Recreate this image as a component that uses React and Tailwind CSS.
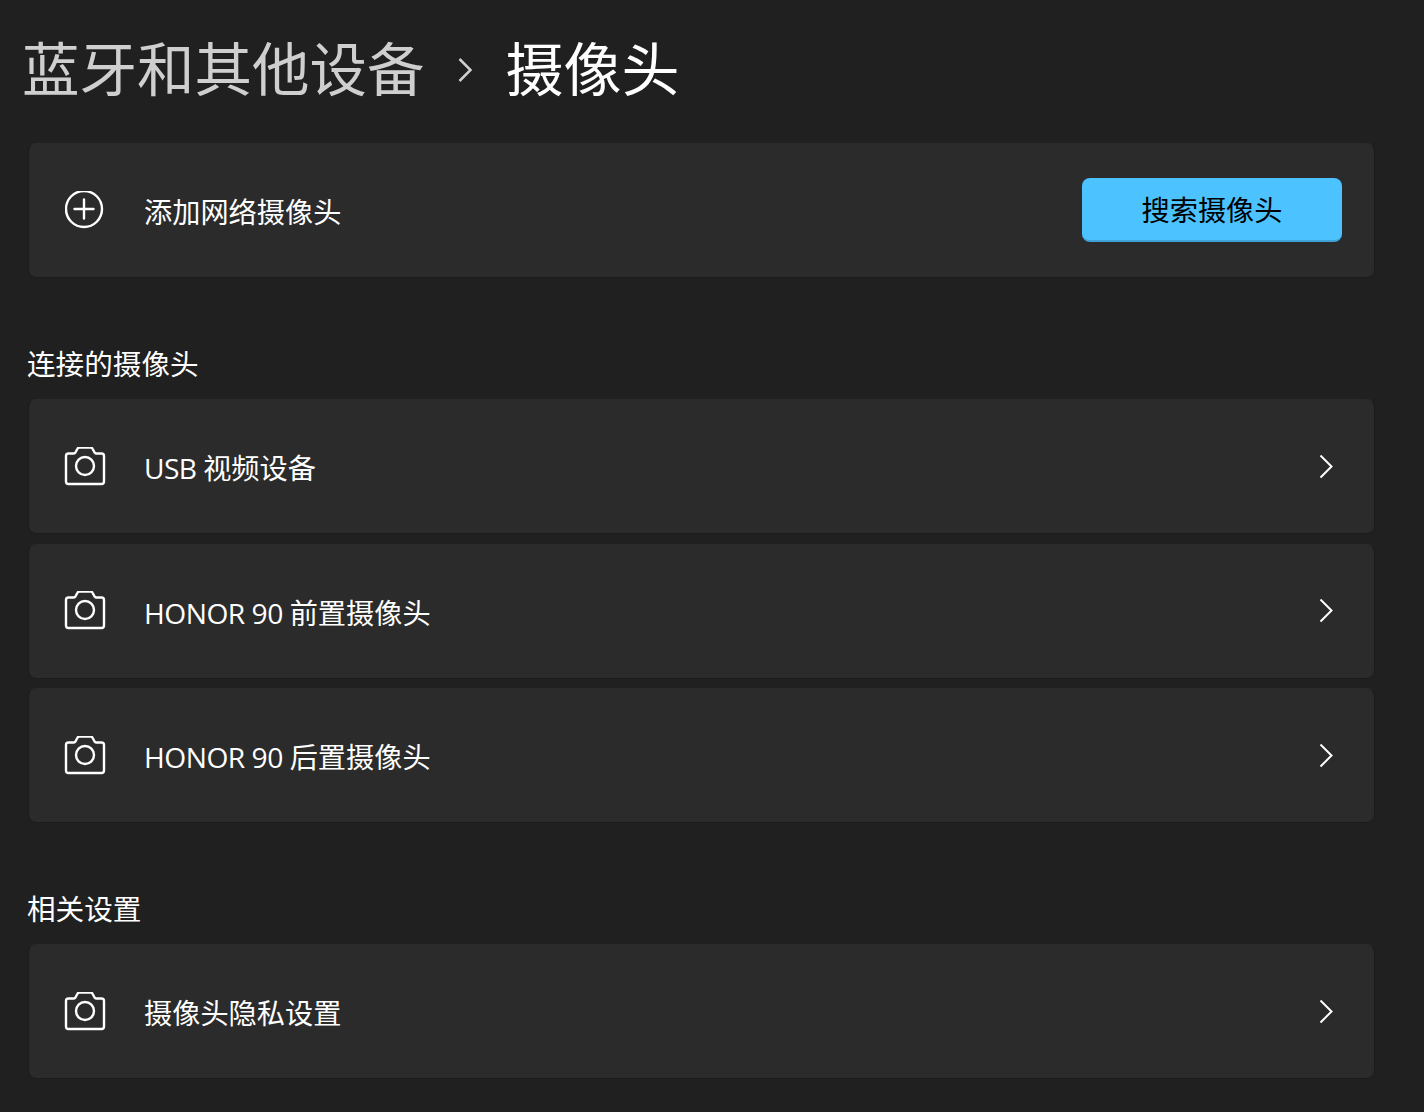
const PlusCircle = () => (
    <svg width="40" height="40" viewBox="0 0 40 40" fill="none" stroke="white" strokeWidth="2.4">
        <circle cx="19" cy="18" r="18" />
        <path d="M19 8.500v19M9.500 18h19" strokeLinecap="round" />
    </svg>
);

const Camera = () => (
    <svg width="42" height="40" viewBox="0 0 42 40" fill="none" stroke="white" strokeWidth="2.4" strokeLinejoin="round">
        <path d="M4.500 6.500h5.500c.6 0 1-.3 1.300-.8l2-3.700c.4-.9 1.100-1.500 2-1.500h11.400c.9 0 1.600.6 2 1.500l2 3.700c.3.5.7.8 1.300.8h5.500c1.500 0 2.500 1 2.500 2.500v25.500c0 1.500-1 2.500-2.500 2.500h-33c-1.500 0-2.500-1-2.500-2.500v-25.500c0-1.500 1-2.500 2.500-2.500z" />
        <circle cx="21" cy="19" r="9" />
    </svg>
);

const Chevron = () => (
    <svg className="mr-[9px]" width="14" height="24" viewBox="0 0 14 24" fill="none" stroke="white" strokeWidth="2">
        <path d="M1.500 .5l11 11-11 11" />
    </svg>
);

const Card = ({ icon, label, children, className = '' }) => (
    <div className={`flex h-[135px] items-center justify-between rounded-lg border border-[#1c1c1c] border-t-[#2b2b2b] bg-[#2b2b2b] pl-[35px] pr-[32px] ${className}`}>
        <div className="flex items-center">
            <div className="flex w-[42px] justify-center">{icon}</div>
            <span className="ml-[38px] mt-[3px] text-[28.200px] leading-[40px] text-white">{label}</span>
        </div>
        {children}
    </div>
);

const rows = ['USB', 'HONOR 90'];

export default function App() {
    return (
        <div className="h-[1112px] w-[1424px] overflow-hidden bg-[#202020] pl-[28px] pr-[49px] font-['Open_Sans','Noto_Sans_CJK_SC',sans-serif]">
            <div className="-ml-[6px] flex h-[143px] items-start pt-[29px] text-[57.500px] leading-[80px]">
                <span className="text-[#cfcfcf]">蓝牙和其他设备</span>
                <svg className="ml-[32px] mt-[28px]" width="16" height="26" viewBox="0 0 16 26" fill="none" stroke="#cfcfcf" strokeWidth="2.500">
                    <path d="M2.500 2l11 11-11 11" />
                </svg>
                <span className="ml-[33px] text-[58px] text-white">摄像头</span>
            </div>

            <Card icon={<PlusCircle />} label="添加网络摄像头">
                <button className="mb-[2px] h-[64px] w-[260px] rounded-lg border-b-2 border-[#3fa3d8] bg-[#4cc2ff] pt-[3px] text-[28.200px] leading-[40px] text-black">
                    搜索摄像头
                </button>
            </Card>

            <h2 className="-ml-[1px] mt-[66px] text-[28.600px] leading-[40px] text-white">连接的摄像头</h2>
            <div className="mt-[15px] flex flex-col gap-[9.500px]">
                <Card icon={<Camera />} label={<><span className="tracking-[-0.6px]">{rows[0]} </span>视频设备</>}><Chevron /></Card>
                <Card icon={<Camera />} label={<><span className="tracking-[-0.5px]">{rows[1]} </span>前置摄像头</>}><Chevron /></Card>
                <Card icon={<Camera />} label={<><span className="tracking-[-0.5px]">{rows[1]} </span>后置摄像头</>}><Chevron /></Card>
            </div>

            <h2 className="-ml-[1px] mt-[66px] text-[28.600px] leading-[40px] text-white">相关设置</h2>
            <Card className="mt-[15px]" icon={<Camera />} label="摄像头隐私设置"><Chevron /></Card>
        </div>
    );
}
